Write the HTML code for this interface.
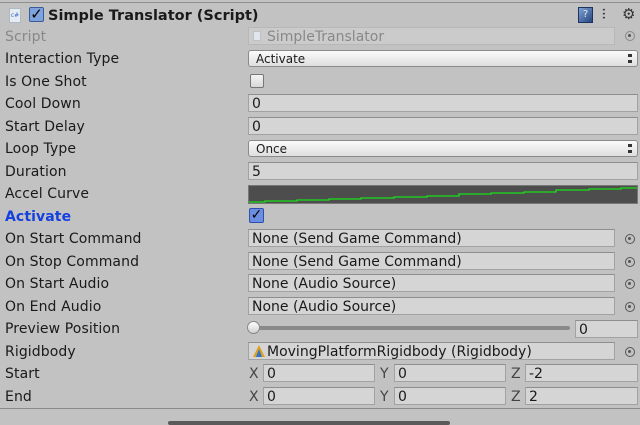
<!DOCTYPE html>
<html><head><meta charset="utf-8"><style>
*{margin:0;padding:0;box-sizing:border-box}
body{width:640px;height:424px;background:#c2c2c2;position:relative;overflow:hidden;font-family:"DejaVu Sans","Liberation Sans",sans-serif;font-size:14px;color:#1a1a1a}
.a{position:absolute}
.lbl{position:absolute;left:5px;height:18px;line-height:20px;white-space:nowrap;letter-spacing:0.1px}
.f{position:absolute;height:18px;line-height:18px;background:#d5d5d5;border:1px solid #a2a2a2;border-top-color:#8e8e8e;padding-left:3px;white-space:nowrap;overflow:hidden}
.dd{position:absolute;left:248px;width:390px;height:17px;line-height:16px;border:1px solid #8a8a8a;border-radius:3px;background:linear-gradient(#fbfbfb,#dedede);font-size:12px;padding-left:7px}
.dd:after{content:"";position:absolute;right:5px;top:3px;width:4px;height:9px;background:linear-gradient(#333 0 35%,transparent 35% 65%,#333 65%)}
.cir{position:absolute;left:625px;width:10px;height:10px;border:1.5px solid #555;border-radius:50%}
.cir:after{content:"";position:absolute;left:2px;top:2px;width:3px;height:3px;background:#555;border-radius:50%}
.ax{position:absolute;height:18px;line-height:20px;color:#444}
</style></head><body>
<div class="a" style="left:0;top:2px;width:640px;height:1px;background:#8f8f8f"></div>
<div class="a" style="left:9px;top:8px;width:12px;height:15px;background:#e6ecf4;border:1px solid #b0b8c4;font-size:6px;color:#3a6cc0;line-height:13px;text-align:center">c#</div>
<div class="a" style="left:29px;top:7px;width:15px;height:15px;background:#7da2dc;border:1px solid #3a5a9a;border-radius:2px;color:#000;font-size:15px;line-height:13px;text-align:center;font-weight:bold">✓</div>
<div class="a" style="left:48px;top:7px;font-weight:bold;font-size:14.5px;line-height:19px">Simple Translator (Script)</div>
<div class="a" style="left:578px;top:7px;width:15px;height:16px;background:linear-gradient(135deg,#7fa2d4,#25477f);border:1px solid #1d355e;color:#dfe8f5;font-size:10px;line-height:14px;text-align:center">?</div>
<div class="a" style="left:602px;top:7px;font-size:14px;font-weight:bold;color:#333">⫶</div>
<div class="a" style="left:622px;top:5px;font-size:15px;color:#333">⚙</div>

<div class="lbl" style="top:27px;color:#888">Script</div>
<div class="f" style="left:248px;top:27px;width:367px;color:#888;background:#cbcbcb;border-color:#b8b8b8;padding-left:18px">SimpleTranslator<span style="position:absolute;left:4px;top:3px;width:8px;height:10px;background:#e0e6ee;border:1px solid #c0c0c0"></span></div>
<div class="cir" style="top:31px;border-color:#888"></div>

<div class="lbl" style="top:49px">Interaction Type</div>
<div class="dd" style="top:50px">Activate</div>
<div class="lbl" style="top:72px">Is One Shot</div>
<div class="a" style="left:250px;top:74px;width:14px;height:14px;border:1px solid #777;border-radius:2px;background:linear-gradient(#f4f4f4,#d8d8d8)"></div>
<div class="lbl" style="top:94px">Cool Down</div>
<div class="f" style="left:248px;top:94px;width:390px">0</div>
<div class="lbl" style="top:117px">Start Delay</div>
<div class="f" style="left:248px;top:117px;width:390px">0</div>
<div class="lbl" style="top:139px">Loop Type</div>
<div class="dd" style="top:140px">Once</div>
<div class="lbl" style="top:162px">Duration</div>
<div class="f" style="left:248px;top:162px;width:390px">5</div>
<div class="lbl" style="top:184px">Accel Curve</div>
<div class="a" style="left:248px;top:185px;width:390px;height:19px;background:#4d4d4d;border:1px solid #777">
<svg width="388" height="17" style="position:absolute;left:0;top:0"><polyline fill="none" stroke="#19e019" stroke-width="1.3" points="0,16 16,16 16,15 48,15 48,14 80,14 80,13 112,13 112,12 145,12 145,11 178,11 178,10 210,10 210,8 242,8 242,7 275,7 275,6 307,6 307,4 340,4 340,3 372,3 372,2 388,2"/></svg></div>
<div class="lbl" style="top:207px;color:#1540e0;font-weight:bold">Activate</div>
<div class="a" style="left:249px;top:208px;width:15px;height:15px;background:#6d8ee0;border:1px solid #2c4fb0;border-radius:2px;color:#000;font-size:14px;line-height:13px;text-align:center;font-weight:bold">✓</div>
<div class="lbl" style="top:229px">On Start Command</div>
<div class="f" style="left:248px;top:229px;width:367px">None (Send Game Command)</div><div class="cir" style="top:234px"></div>
<div class="lbl" style="top:252px">On Stop Command</div>
<div class="f" style="left:248px;top:252px;width:367px">None (Send Game Command)</div><div class="cir" style="top:257px"></div>
<div class="lbl" style="top:274px">On Start Audio</div>
<div class="f" style="left:248px;top:274px;width:367px">None (Audio Source)</div><div class="cir" style="top:279px"></div>
<div class="lbl" style="top:297px">On End Audio</div>
<div class="f" style="left:248px;top:297px;width:367px">None (Audio Source)</div><div class="cir" style="top:302px"></div>
<div class="lbl" style="top:319px">Preview Position</div>
<div class="a" style="left:252px;top:326px;width:318px;height:4px;background:#8a8a8a;border-radius:2px"></div>
<div class="a" style="left:247px;top:321px;width:13px;height:13px;border-radius:50%;background:linear-gradient(#fff,#d0d0d0);border:1px solid #888"></div>
<div class="f" style="left:575px;top:320px;width:63px">0</div>
<div class="lbl" style="top:342px">Rigidbody</div>
<div class="f" style="left:248px;top:342px;width:367px;padding-left:18px">MovingPlatformRigidbody (Rigidbody)<svg width="12" height="12" style="position:absolute;left:4px;top:2px"><polygon points="6,0 12,12 0,12" fill="#e0a020"/><polygon points="6,4 9,12 3,12" fill="#3070d0"/></svg></div>
<div class="cir" style="top:347px"></div>
<div class="lbl" style="top:364px">Start</div>
<div class="ax" style="left:249px;top:364px">X</div><div class="f" style="left:263px;top:364px;width:112px">0</div>
<div class="ax" style="left:380px;top:364px">Y</div><div class="f" style="left:394px;top:364px;width:112px">0</div>
<div class="ax" style="left:511px;top:364px">Z</div><div class="f" style="left:525px;top:364px;width:113px">-2</div>
<div class="lbl" style="top:387px">End</div>
<div class="ax" style="left:249px;top:387px">X</div><div class="f" style="left:263px;top:387px;width:112px">0</div>
<div class="ax" style="left:380px;top:387px">Y</div><div class="f" style="left:394px;top:387px;width:112px">0</div>
<div class="ax" style="left:511px;top:387px">Z</div><div class="f" style="left:525px;top:387px;width:113px">2</div>
<div class="a" style="left:0;top:408px;width:640px;height:1px;background:#8a8a8a"></div>
<div class="a" style="left:168px;top:421px;width:282px;height:4px;background:#5a5a5a;border-radius:2px"></div>
</body></html>
